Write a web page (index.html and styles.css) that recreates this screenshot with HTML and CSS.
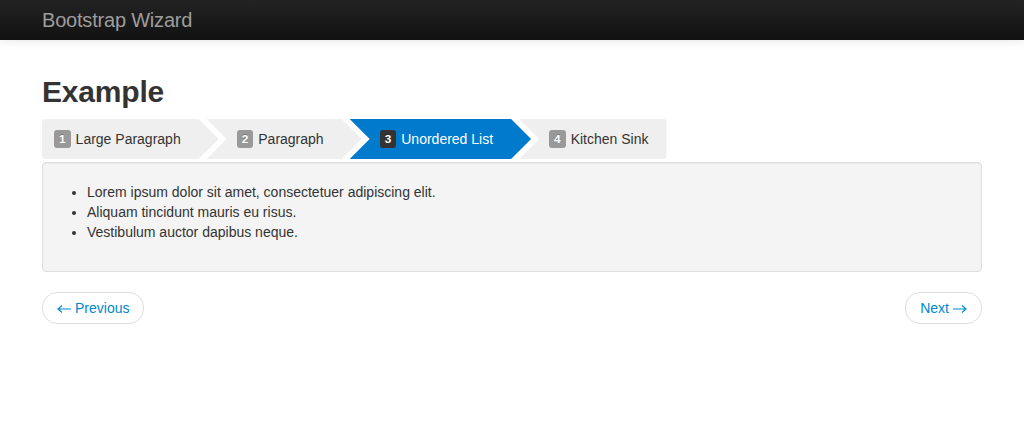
FILE: index.html
```html
<!DOCTYPE html>
<html lang="en">
<head>
<meta charset="utf-8">
<title>Bootstrap Wizard</title>
<link rel="stylesheet" href="styles.css">
</head>
<body>
<header class="navbar">
  <div class="container">
    <a class="brand" href="#">Bootstrap Wizard</a>
  </div>
</header>
<main class="container page">
  <h1>Example</h1>
  <nav class="wizard">
    <a class="step step-first" href="#"><span class="badge">1</span>Large Paragraph</a>
    <a class="step" href="#"><span class="badge">2</span>Paragraph</a>
    <a class="step step-current" href="#"><span class="badge badge-inverse">3</span>Unordered List</a>
    <a class="step step-last" href="#"><span class="badge">4</span>Kitchen Sink</a>
  </nav>
  <div class="well">
    <ul>
      <li>Lorem ipsum dolor sit amet, consectetuer adipiscing elit.</li>
      <li>Aliquam tincidunt mauris eu risus.</li>
      <li>Vestibulum auctor dapibus neque.</li>
    </ul>
  </div>
  <div class="pager">
    <a class="pager-btn" href="#"><svg class="arrow arrow-left" width="14" height="10" viewBox="0 0 14 10" aria-hidden="true"><path d="M1 5H14M5 1.5L1 5L5 8.5" fill="none" stroke="currentColor" stroke-width="1.1"/></svg>Previous</a>
    <a class="pager-btn" href="#">Next<svg class="arrow arrow-right" width="14" height="10" viewBox="0 0 14 10" aria-hidden="true"><path d="M0 5H13M9 1.5L13 5L9 8.5" fill="none" stroke="currentColor" stroke-width="1.1"/></svg></a>
  </div>
</main>
</body>
</html>
```

FILE: styles.css
```css
html, body {
  margin: 0;
  padding: 0;
}

body {
  font-family: "Liberation Sans", Arial, Helvetica, sans-serif;
  font-size: 14px;
  line-height: 20px;
  color: #333;
  background: #fff;
}

a {
  text-decoration: none;
}

.container {
  width: 940px;
  margin: 0 auto;
}

.navbar {
  height: 40px;
  background: linear-gradient(to bottom, #232323, #111111);
  box-shadow: 0 1px 10px rgba(0, 0, 0, 0.1);
}

.brand {
  display: block;
  padding: 10px 0;
  font-size: 20px;
  line-height: 20px;
  color: #9d9d9d;
  letter-spacing: -0.2px;
}

.page {
  padding-top: 32px;
}

h1 {
  margin: 0;
  font-size: 30px;
  line-height: 40px;
  font-weight: bold;
  color: #333;
  letter-spacing: -0.2px;
}

.wizard {
  display: flex;
  height: 40px;
  margin-top: 7px;
}

.step {
  display: flex;
  align-items: center;
  height: 40px;
  padding: 0 38px 0 30px;
  margin-left: -12px;
  background: #efefef;
  color: #333;
  clip-path: polygon(0 0, calc(100% - 20px) 0, 100% 50%, calc(100% - 20px) 100%, 0 100%, 20px 50%);
}

.step-first {
  margin-left: 0;
  padding-left: 12px;
  border-radius: 4px 0 0 4px;
  clip-path: polygon(0 0, calc(100% - 20px) 0, 100% 50%, calc(100% - 20px) 100%, 0 100%);
}

.step-last {
  padding-right: 18px;
  border-radius: 0 4px 4px 0;
  clip-path: polygon(0 0, 100% 0, 100% 100%, 0 100%, 20px 50%);
}

.step-current {
  background: #007acc;
  color: #fff;
}

.badge {
  display: inline-block;
  margin-right: 5px;
  padding: 2px 5px;
  font-size: 11.844px;
  line-height: 14px;
  font-weight: bold;
  color: #fff;
  background: #999;
  border-radius: 3px;
  text-shadow: 0 -1px 0 rgba(0, 0, 0, 0.25);
}

.badge-inverse {
  background: #333;
}

.well {
  margin-top: 3px;
  padding: 19px 19px 19px;
  background: #f4f4f4;
  border: 1px solid #e0e0e0;
  border-radius: 4px;
  box-shadow: inset 0 1px 1px rgba(0, 0, 0, 0.05);
}

.well ul {
  margin: 0 0 10px 25px;
  padding: 0;
}

.pager {
  display: flex;
  justify-content: space-between;
  margin: 20px 0;
}

.pager-btn {
  display: inline-flex;
  align-items: center;
  padding: 5px 14px;
  background: #fff;
  border: 1px solid #ddd;
  border-radius: 15px;
  color: #0088cc;
}

.arrow {
  display: block;
  flex: none;
  margin-top: 1px;
}

.arrow-left {
  margin-right: 4px;
}

.arrow-right {
  margin-left: 4px;
}
```
